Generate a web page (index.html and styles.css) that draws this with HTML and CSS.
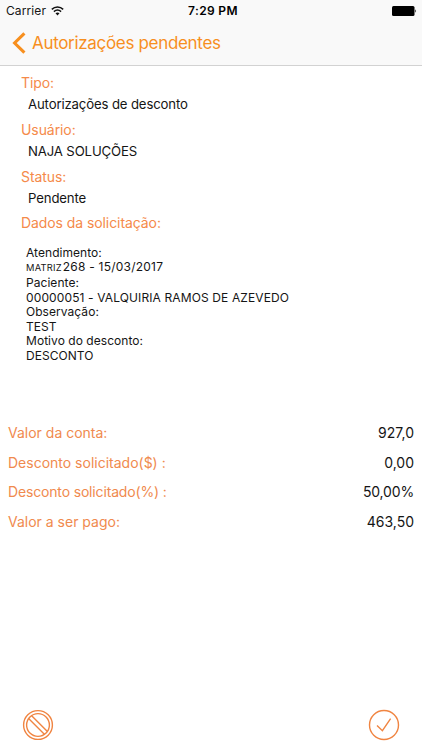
FILE: index.html
```html
<!DOCTYPE html>
<html lang="pt-BR">
<head>
    <meta charset="UTF-8">
    <meta name="viewport" content="width=device-width, initial-scale=1.0">
    <title>Autorizações pendentes</title>
    <link rel="stylesheet" href="styles.css">
</head>
<body>
    <header>
        <div class="status-bar">
            <div class="carrier">
                <span>Carrier</span>
                <svg width="13" height="10" viewBox="0 0 13 10">
                    <path d="M.8 3.4 C4 .3 9 .3 12.2 3.4 M2.9 5.6 C5 3.7 8 3.7 10.1 5.6" fill="none" stroke="#111" stroke-width="1.5"/>
                    <path d="M4.5 7.2 Q6.5 5.6 8.5 7.2 L6.5 9.4 Z" fill="#111"/>
                </svg>
            </div>
            <span class="time">7:29 PM</span>
            <svg class="battery" width="25" height="10" viewBox="0 0 25 10">
                <rect width="22.5" height="10" rx="1.5" fill="#000"/>
                <path d="M23.3 3.3 Q25 5 23.3 6.7 Z" fill="#000"/>
            </svg>
        </div>
        <div class="nav-bar">
            <svg width="14" height="22" viewBox="0 0 14 22">
                <path d="M12.4 1.3 L2.6 11 L12.4 20.7" fill="none" stroke="#f78f1e" stroke-width="3.1"/>
            </svg>
            <span class="nav-title">Autorizações pendentes</span>
        </div>
    </header>

    <main>
        <dl class="info">
            <dt>Tipo:</dt>
            <dd>Autorizações de desconto</dd>
            <dt>Usuário:</dt>
            <dd>NAJA SOLUÇÕES</dd>
            <dt>Status:</dt>
            <dd>Pendente</dd>
            <dt>Dados da solicitação:</dt>
        </dl>

        <div class="details">
            <p>Atendimento:</p>
            <p class="number"><small>MATRIZ</small>268 - 15/03/2017</p>
            <p>Paciente:</p>
            <p class="patient">00000051 - VALQUIRIA RAMOS DE AZEVEDO</p>
            <p>Observação:</p>
            <p>TEST</p>
            <p>Motivo do desconto:</p>
            <p>DESCONTO</p>
        </div>

        <div class="totals">
            <div class="row"><span class="label">Valor da conta:</span><span>927,0</span></div>
            <div class="row"><span class="label">Desconto solicitado($) :</span><span>0,00</span></div>
            <div class="row percent"><span class="label">Desconto solicitado(%) :</span><span>50,00%</span></div>
            <div class="row"><span class="label">Valor a ser pago:</span><span>463,50</span></div>
        </div>
    </main>

    <footer>
        <svg width="32" height="32" viewBox="0 0 32 32" fill="none" stroke="#f08542" stroke-width="1.4">
            <circle cx="16" cy="16" r="14.4"/>
            <circle cx="16" cy="16" r="11.4"/>
            <path d="M6.6 9.4 L22.6 25.4 M9.4 6.6 L25.4 22.6"/>
        </svg>
        <svg width="32" height="32" viewBox="0 0 32 32" fill="none" stroke="#f08542" stroke-width="1.4">
            <circle cx="16" cy="16" r="14.5"/>
            <path d="M9 16.4 L14.4 21.7 L22.6 9.6"/>
        </svg>
    </footer>
</body>
</html>
```
FILE: styles.css
```css
* {
    box-sizing: border-box;
}
body {
    margin: 0;
    height: 750px;
    display: flex;
    flex-direction: column;
    background: #fff;
    color: #151515;
    font-family: Inter, sans-serif;
    font-size: 14px;
}
header {
    height: 66px;
    background: #f9f9f9;
    border-bottom: 1px solid #d2d2d2;
}
.status-bar {
    height: 21px;
    display: grid;
    grid-template-columns: 1fr auto 1fr;
    align-items: center;
    padding: 0 5px 0 6px;
    font-size: 12px;
}
.carrier {
    display: flex;
    align-items: center;
    gap: 5px;
    letter-spacing: .1px;
}
.time {
    font-weight: 600;
    color: #000;
    letter-spacing: .35px;
    padding-left: 3px;
}
.battery {
    justify-self: end;
}
.nav-bar {
    height: 44px;
    display: flex;
    align-items: center;
    padding-left: 12px;
    gap: 6px;
}
.nav-title {
    color: #f78f1e;
    font-size: 17px;
    letter-spacing: -.32px;
}
main {
    flex: 1;
}
.info {
    margin: 0;
    padding: 5px 0 0 21px;
}
.info dt {
    height: 22px;
    line-height: 23px;
    color: #f58a4a;
    letter-spacing: -.08px;
}
.info dd {
    height: 24.8px;
    line-height: 23.6px;
    margin: 0 0 0 7px;
    font-size: 13.2px;
    letter-spacing: -.15px;
}
.details {
    padding: 12.5px 0 0 26px;
    font-size: 12px;
    line-height: 14.6px;
    letter-spacing: .05px;
}
.details p {
    margin: 0;
}
.details .number {
    letter-spacing: .23px;
}
.details .patient {
    letter-spacing: .12px;
}
.details small {
    font-size: 9.3px;
    margin-right: 1px;
}
.totals {
    padding: 54.5px 8px 0;
}
.row {
    display: flex;
    justify-content: space-between;
    height: 29.6px;
    line-height: 30px;
}
.percent {
    letter-spacing: -.16px;
}
.label {
    color: #f08a4e;
}
footer {
    display: flex;
    justify-content: space-between;
    padding: 0 22px 9.5px 21.5px;
}
```
